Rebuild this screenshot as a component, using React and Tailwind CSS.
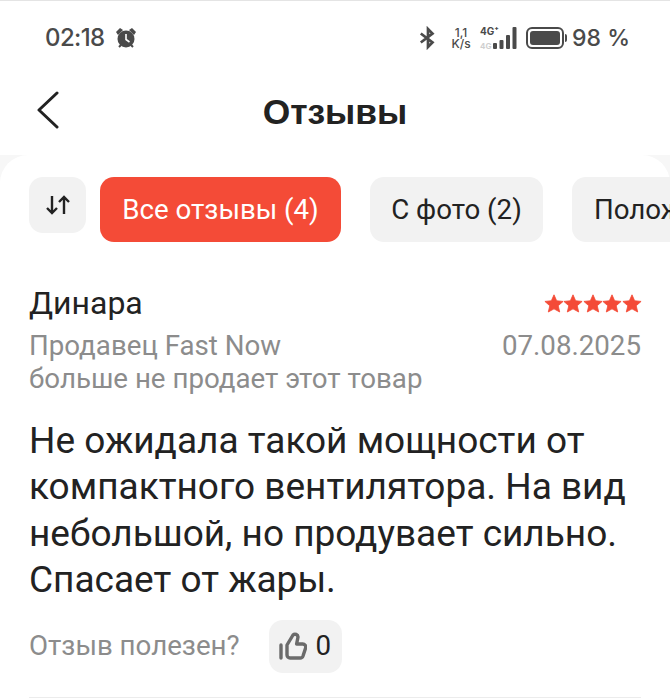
const font = "font-['Roboto',sans-serif]";

function Star() {
  return (
    <svg width="20" height="19" viewBox="0 0 24 23" className="-mr-[0.5px]">
      <path d="M12 1l3.2 7.2 7.8.8-5.9 5.2 1.8 7.6L12 18l-6.9 3.8 1.8-7.6L1 9l7.8-.8z" fill="#f44b37" stroke="#f44b37" strokeLinejoin="round" />
    </svg>
  );
}

function StatusBar() {
  return (
    <div className="flex h-[74px] items-center justify-between pl-[45px] pr-[40px] text-[#4a4a4a] font-['Inter',sans-serif]">
      <div className="flex items-center gap-[9px]">
        <span className="text-[24px] font-medium tracking-tight">02:18</span>
        <svg width="24" height="24" viewBox="0 0 24 24" fill="#4a4a4a">
          <circle cx="12" cy="13" r="8.5" />
          <path d="M2 6l4-4 3 2-5 5zM22 6l-4-4-3 2 5 5z" />
          <path d="M12 8v5.5l3.5 2.5" stroke="#fff" strokeWidth="1.6" fill="none" />
          <path d="M5 21l2-2M19 21l-2-2" stroke="#4a4a4a" strokeWidth="2" />
        </svg>
      </div>
      <div className="flex items-center">
        <svg width="18" height="24" viewBox="0 0 20 24" fill="none" stroke="#4a4a4a" strokeWidth="3">
          <path d="M2 7l13 10-5 5V2l5 5L2 17" />
        </svg>
        <div className="ml-[12px] flex w-[24px] flex-col items-center text-[12px] font-medium leading-[11px]">
          <span>1,1</span>
          <span>K/s</span>
        </div>
        <div className="relative ml-[7px] h-[24px] w-[38px]">
          <span className="absolute left-0 top-0 text-[10px] font-bold leading-[10px]">4G⁺</span>
          <span className="absolute left-0 bottom-0 text-[8px] font-bold leading-[8px] text-[#cfcfcf]">4G</span>
          <svg width="38" height="24" viewBox="0 0 38 24" fill="#4a4a4a">
            <rect x="13" y="17" width="4" height="6" rx="1" />
            <rect x="19.5" y="14" width="4" height="9" rx="1" />
            <rect x="26" y="9" width="4" height="14" rx="1" />
            <rect x="32.5" y="1" width="4" height="22" rx="1" />
          </svg>
        </div>
        <div className="ml-[8px] flex h-[22px] w-[38px] items-center rounded-[6px] border-2 border-[#4a4a4a] p-[2px]">
          <div className="h-full w-full rounded-[3px] bg-[#4a4a4a]" />
        </div>
        <div className="ml-[1px] h-[8px] w-[2px] rounded-r bg-[#4a4a4a]" />
        <span className="ml-[5px] text-[23px] font-medium">98 %</span>
      </div>
    </div>
  );
}

export default function App() {
  return (
    <div className={`${font} h-[700px] w-[670px] overflow-hidden bg-[#f7f7f7]`}>
      <div className="border-t border-[#e4e4e4] bg-white pb-[5px]">
        <StatusBar />
        <div className="relative flex h-[75px] items-center justify-center">
          <svg className="absolute left-[36px] top-[16px]" width="24" height="38" viewBox="0 0 24 38" fill="none" stroke="#222" strokeWidth="3" strokeLinecap="round" strokeLinejoin="round">
            <path d="M21 2L3 19l18 17" />
          </svg>
          <h1 className="font-['Liberation_Sans',sans-serif] text-[35.4px] font-bold text-[#222]">Отзывы</h1>
        </div>
      </div>
      <div className="h-[545px] rounded-t-[28px] bg-white px-[29px]">
        <div className="-mr-[29px] flex items-start overflow-hidden pt-[22px]">
          <button className="flex h-[56px] w-[57px] shrink-0 items-center justify-center rounded-[14px] bg-[#f2f2f2]">
            <svg width="28" height="24" viewBox="0 0 28 24" fill="none" stroke="#222" strokeWidth="2.4">
              <path d="M8 3v17M3 15l5 5 5-5M20 21V4M15 9l5-5 5 5" />
            </svg>
          </button>
          <button className="ml-[14px] h-[65px] w-[241px] shrink-0 rounded-[14px] bg-[#f44b37] text-[27.7px] text-white">Все отзывы (4)</button>
          <button className="ml-[29px] h-[65px] w-[173px] shrink-0 rounded-[14px] bg-[#f2f2f2] text-[27.7px] text-[#222]">С фото (2)</button>
          <button className="ml-[29px] h-[65px] shrink-0 rounded-[14px] bg-[#f2f2f2] pl-[22px] pr-[22px] text-[27.7px] whitespace-nowrap text-[#222]">Полож</button>
        </div>
        <div className="mt-[44px] flex items-start justify-between">
          <div>
            <div className="text-[32px] leading-[34px] text-[#222]">Динара</div>
            <div className="mt-[9px] text-[27.7px] leading-[33px] text-[#8c8c8c]">
              Продавец Fast Now<br />больше не продает этот товар
            </div>
          </div>
          <div className="flex flex-col items-end">
            <div className="flex h-[34px] items-center"><Star /><Star /><Star /><Star /><Star /></div>
            <div className="mt-[9px] text-[27.7px] leading-[33px] text-[#8c8c8c]">07.08.2025</div>
          </div>
        </div>
        <p className="mt-[23px] text-[37px] leading-[46.4px] text-[#222]">
          Не ожидала такой мощности от компактного вентилятора. На вид небольшой, но продувает сильно. Спасает от жары.
        </p>
        <div className="mt-[16px] flex items-center">
          <span className="text-[27.7px] text-[#8c8c8c]">Отзыв полезен?</span>
          <button className="ml-[29px] flex h-[53px] w-[73px] items-center justify-center gap-[8px] rounded-[14px] bg-[#f2f2f2] text-[27.7px] text-[#222]">
            <svg width="28" height="28" viewBox="0 0 28 28" fill="none" stroke="#6b6b6b" strokeWidth="3.4" strokeLinejoin="round" strokeLinecap="round">
              <path d="M2 13v13M8 13v10a3 3 0 0 0 3 3h10a3 3 0 0 0 3-2l2.6-8a3 3 0 0 0-3-4h-6l1.4-7a3 3 0 0 0-5-2z" />
            </svg>
            0
          </button>
        </div>
        <div className="mt-[24px] h-[1px] bg-[#ececec]" />
      </div>
    </div>
  );
}
